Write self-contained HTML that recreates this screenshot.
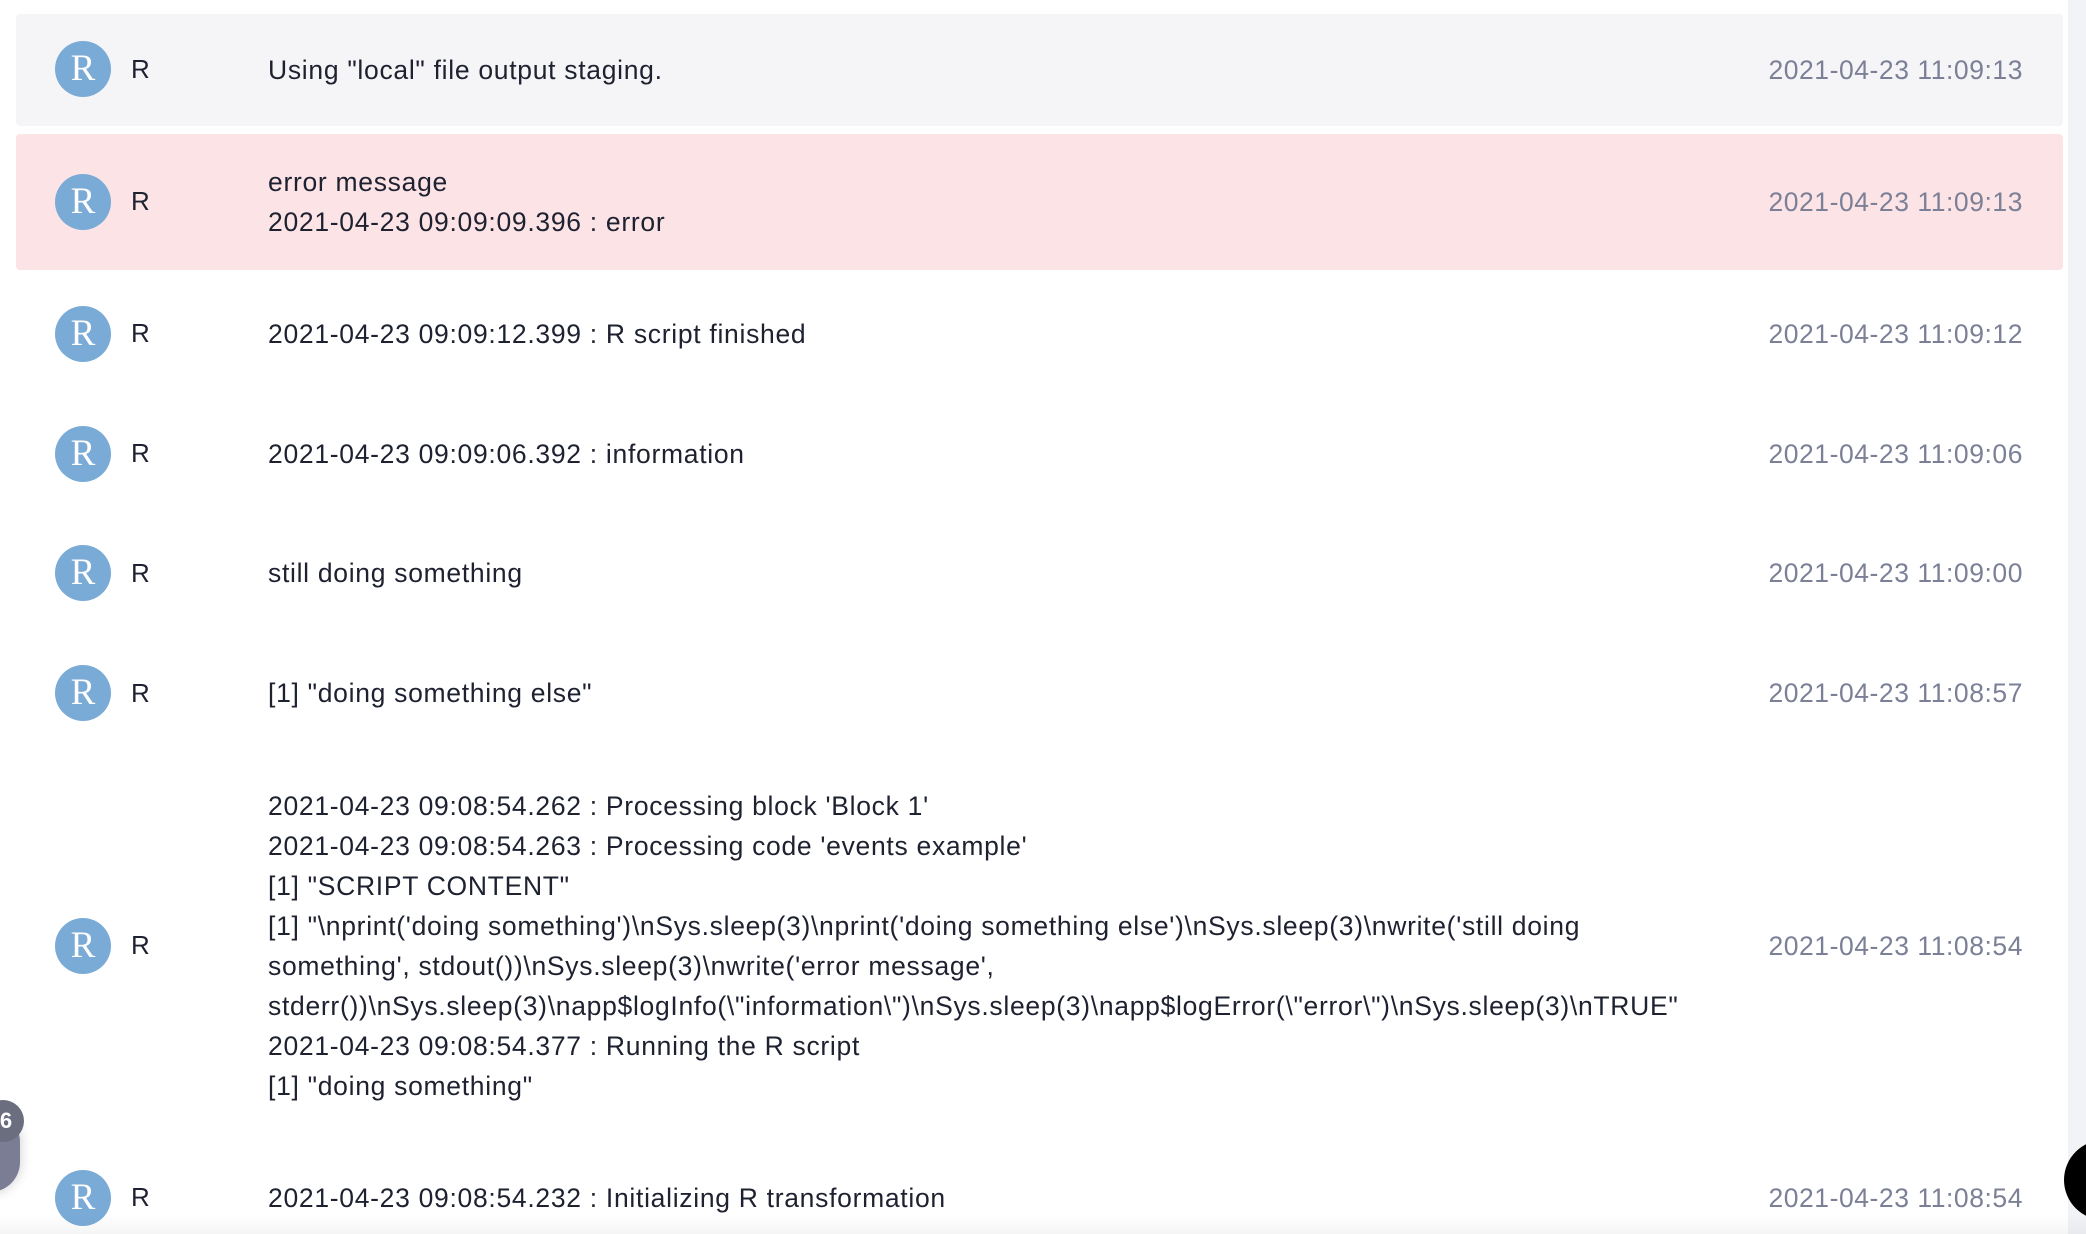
<!DOCTYPE html>
<html><head><meta charset="utf-8"><style>
body{margin:0;width:2086px;height:1234px;background:#fff;position:relative;overflow:hidden;font-family:"Liberation Sans",Roboto,sans-serif;color:#1e2130}
.row{position:absolute;left:16px;width:2047px;border-radius:4px}
.av{position:absolute;left:55px;width:56px;height:56px;border-radius:50%;background:#7aabd7;color:#fff;font-family:"Liberation Serif",serif;font-size:37px;line-height:56px;text-align:center}
.r{position:absolute;left:131px;font-size:26px;line-height:30px}
.msg{position:absolute;left:268px;font-size:26.5px;line-height:40px;width:1760px;letter-spacing:0.7px;white-space:nowrap}
.ts{position:absolute;right:63px;font-size:26.5px;line-height:40px;color:#7c8097;text-align:right;letter-spacing:0.55px}
</style></head><body>
<div class="row" style="top:14px;height:112px;background:#f5f5f7"></div>
<div class="row" style="top:134px;height:136px;background:#fce4e6"></div>
<div style="position:absolute;right:0;top:0;width:18px;height:1234px;background:#f2f3f6"></div>

<div class="av" style="top:41px">R</div><div class="r" style="top:54px">R</div>
<div class="msg" style="top:50px">Using "local" file output staging.</div><div class="ts" style="top:50px">2021-04-23 11:09:13</div>

<div class="av" style="top:174px">R</div><div class="r" style="top:186px">R</div>
<div class="msg" style="top:162px">error message<br>2021-04-23 09:09:09.396 : error</div><div class="ts" style="top:182px">2021-04-23 11:09:13</div>

<div class="av" style="top:306px">R</div><div class="r" style="top:318px">R</div>
<div class="msg" style="top:314px">2021-04-23 09:09:12.399 : R script finished</div><div class="ts" style="top:314px">2021-04-23 11:09:12</div>

<div class="av" style="top:426px">R</div><div class="r" style="top:438px">R</div>
<div class="msg" style="top:434px">2021-04-23 09:09:06.392 : information</div><div class="ts" style="top:434px">2021-04-23 11:09:06</div>

<div class="av" style="top:545px">R</div><div class="r" style="top:558px">R</div>
<div class="msg" style="top:553px">still doing something</div><div class="ts" style="top:553px">2021-04-23 11:09:00</div>

<div class="av" style="top:665px">R</div><div class="r" style="top:678px">R</div>
<div class="msg" style="top:673px">[1] "doing something else"</div><div class="ts" style="top:673px">2021-04-23 11:08:57</div>

<div class="av" style="top:918px">R</div><div class="r" style="top:930px">R</div>
<div class="msg" style="top:786px">2021-04-23 09:08:54.262 : Processing block 'Block 1'<br>2021-04-23 09:08:54.263 : Processing code 'events example'<br>[1] "SCRIPT CONTENT"<br>[1] "\nprint('doing something')\nSys.sleep(3)\nprint('doing something else')\nSys.sleep(3)\nwrite('still doing<br>something', stdout())\nSys.sleep(3)\nwrite('error message',<br>stderr())\nSys.sleep(3)\napp$logInfo(\"information\")\nSys.sleep(3)\napp$logError(\"error\")\nSys.sleep(3)\nTRUE"<br>2021-04-23 09:08:54.377 : Running the R script<br>[1] "doing something"</div>
<div class="ts" style="top:926px">2021-04-23 11:08:54</div>

<div class="av" style="top:1170px">R</div><div class="r" style="top:1182px">R</div>
<div class="msg" style="top:1178px">2021-04-23 09:08:54.232 : Initializing R transformation</div><div class="ts" style="top:1178px">2021-04-23 11:08:54</div>

<div style="position:absolute;left:0;right:0;bottom:0;height:20px;background:linear-gradient(rgba(0,0,0,0),rgba(0,0,0,0.04))"></div>
<div style="position:absolute;left:-40px;top:1112px;width:60px;height:80px;border-radius:30px;background:#7a7d94;box-shadow:0 0 12px rgba(0,0,0,.2)"></div>
<div style="position:absolute;left:-18px;top:1100px;width:42px;height:42px;border-radius:50%;background:#6b6e7e;color:#fff;font-weight:bold;font-size:22px;line-height:42px;text-align:center">&nbsp;6</div>
<div style="position:absolute;left:2064px;top:1140px;width:80px;height:80px;border-radius:50%;background:#000"></div>
</body></html>
